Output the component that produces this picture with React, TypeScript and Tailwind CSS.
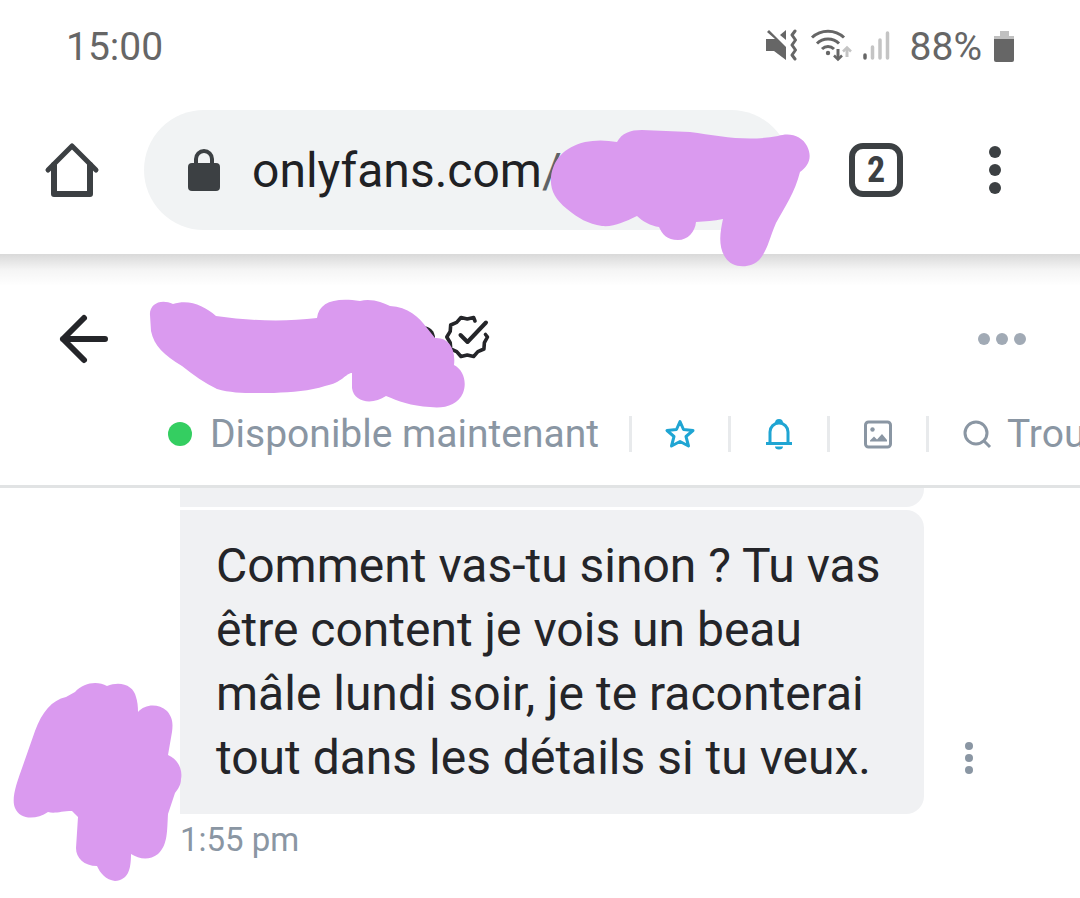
import { useState } from 'react';

const MESSAGE = "Comment vas-tu sinon ? Tu vas être content je vois un beau mâle lundi soir, je te raconterai tout dans les détails si tu veux.";

const StatusBar = () => (
    <div className="relative flex h-[92px] items-center justify-between bg-white px-[66px] pt-0.5 text-[39px] leading-[48px] text-[#666666]">
        <span>15:00</span>
        <div className="flex items-center">
            {/* Muted, vibrating */}
            <svg className="h-9 w-9" viewBox="0 0 36 36" fill="none">
                <path d="M3 1l17 17v13L8 22H0V10h9L1 3z" fill="#666666" />
                <path d="M20 1v10l-6-5z" fill="#666666" />
                <path d="M29 2l-3 4 3.500 5-3.500 5 3.500 5-3.500 5 3 4" stroke="#666666" strokeWidth="3" strokeLinejoin="round" strokeLinecap="round" />
            </svg>
            <svg className="ml-2 h-9 w-11" viewBox="0 0 44 36" fill="none" strokeWidth="3">
                <path d="M2 8.500C11 0 25 0 34 8.500M7 14.500C13 8.500 23 8.500 29 14.500M12 20C15.500 16.500 20.500 16.500 24 20" stroke="#666666" />
                <circle cx="18" cy="24" r="2.200" fill="#666666" />
                <path d="M28 20v10" stroke="#666666" />
                <path d="M24 26.500l4 4 4-4" stroke="#666666" strokeWidth="2.500" />
                <path d="M37 28V19" stroke="#c4c4c4" />
                <path d="M33 22.500l4-4 4 4" stroke="#c4c4c4" strokeWidth="2.500" />
            </svg>
            <svg className="ml-2 h-9 w-8" viewBox="0 0 32 36" fill="none" strokeWidth="3.500" strokeLinecap="round">
                <path d="M3 26v3" stroke="#666666" />
                <path d="M10.500 18v11M18 11v18M25.500 4v25" stroke="#c4c4c4" />
            </svg>
            <span className="ml-4">88%</span>
            <svg className="ml-3 h-8 w-5" viewBox="0 0 20 32">
                <path d="M6 0h9v5h5v4H0V5h6z" fill="#c0c0c0" />
                <path d="M0 8h20v21a2 2 0 0 1-2 2H2a2 2 0 0 1-2-2z" fill="#666666" />
            </svg>
        </div>
    </div>
);

const BrowserBar = () => (
    <div className="relative z-10 flex h-[162px] items-start bg-white pl-11 pt-[18px]">
        <div className="absolute inset-x-0 top-full h-8 bg-linear-to-b from-black/15 via-black/4 to-transparent" />
        <button type="button" aria-label="Accueil" className="mt-8 shrink-0">
            <svg className="h-14 w-14" viewBox="0 0 56 56" fill="none" stroke="#3c4043" strokeWidth="6" strokeLinejoin="round" strokeLinecap="round">
                <path d="M10 23v29h36V23" />
                <path d="M4 28L28 4l24 24" strokeWidth="5" />
            </svg>
        </button>
        <div className="relative ml-11 flex h-[120px] grow items-center rounded-full bg-[#f1f3f4] pl-11 text-[48px] leading-[56px] text-[#202124]">
            <svg className="h-11 w-8 shrink-0" viewBox="0 0 32 44">
                <path d="M8 16V11a8 8 0 0 1 16 0v5" fill="none" stroke="#3c4043" strokeWidth="4" />
                <rect y="15" width="32" height="28" rx="4" fill="#3c4043" />
            </svg>
            <span className="ml-8 pt-0.5">onlyfans.com<span className="text-[#5f6368]">/</span></span>
            <svg className="absolute left-[404px] top-[18px] h-[140px] w-[264px]" viewBox="548 128 264 140">
                <path d="M617 142C622 133 630 130 642 130L690 132C720 136 746 142 778 136C790 132 802 136 807 146C813 158 808 166 800 172C795 192 785 207 776 223C769 239 768 249 760 259C751 269 732 269 725 257C718 246 720 232 723 219C714 221 705 221 696 222C695 232 688 240 678 240C667 240 662 234 659 227C651 226 642 221 637 216C624 222 615 227 602 226C588 224 578 218 567 209C555 199 550 190 551 177C553 160 564 147 585 142Q600 139 617 142Z" fill="#da9aef" />
            </svg>
        </div>
        <button type="button" aria-label="Onglets" className="ml-[58px] mt-[33px] flex h-[54px] w-[54px] shrink-0 items-center justify-center rounded-[14px] border-6 border-[#3c4043] font-['Roboto_Condensed','Liberation_Sans_Narrow','Roboto',sans-serif] text-[36px] font-bold leading-none text-[#3c4043]">2</button>
        <button type="button" aria-label="Menu" className="ml-20 mt-9 mr-[73px] shrink-0">
            <svg className="h-12 w-6" viewBox="0 0 24 48" fill="#3c4043">
                <circle cx="12" cy="6" r="6" />
                <circle cx="12" cy="24" r="6" />
                <circle cx="12" cy="42" r="6" />
            </svg>
        </button>
    </div>
);

const Divider = () => <div className="h-9 w-[3px] shrink-0 bg-[#e8eaec]" />;

const ProfileHeader = () => {
    const [favorite, setFavorite] = useState(false);

    return (
        <header className="border-b-3 border-[#e1e3e4] text-[#8a96a3]">
            <div className="flex h-[150px] items-center pl-14 pr-[53px] pt-5">
                <button type="button" aria-label="Retour" className="shrink-0">
                    <svg className="h-14 w-14" viewBox="0 0 56 56" fill="none" stroke="#242529" strokeWidth="6" strokeLinecap="round" strokeLinejoin="round">
                        <path d="M28 7L7 28l21 21M7 28h42" />
                    </svg>
                </button>
                <div className="relative ml-8 h-[120px] w-[350px]">
                    <svg className="absolute left-[300px] top-[35px] h-12 w-12" viewBox="444 314 48 48" fill="none" stroke="#242529" strokeWidth="4" strokeLinejoin="round" strokeLinecap="round">
                        <path d="M475 321L473.600 317.500L467.300 319L461 317.500L456.700 322.400L450.700 325L450.200 331.400L446.800 337L450.200 342.600L450.700 349L456.700 351.600L461 356.500L467.300 355L473.600 356.500L477.900 351.600L483.900 349L484.400 342.600L487.500 337L485.500 334.500" strokeWidth="3.600" />
                        <path d="M460.500 335l7 7 18.500-19.500" />
                    </svg>
                    <svg className="absolute left-0 top-[15px] h-[120px] w-[330px]" viewBox="144 294 330 120">
                        <circle cx="423" cy="338" r="12" fill="#242529" />
                        <path d="M150 315C149 304 161 298 173 304C190 299 204 306 216 316C250 321 285 322 317 318C319 303 333 297 360 301C372 298 383 303 390 306C408 307 419 317 427 328L435 338C448 337 456 348 454 365C464 370 467 383 463 393C458 405 444 409 430 407C411 406 398 401 386 396C373 405 354 403 352 388V373C346 373 342 383 325 386C310 391 292 392 274 393C252 393 234 394 217 389C205 383 193 375 182 366C164 355 154 346 151 331Z" fill="#da9aef" />
                    </svg>
                </div>
                <button type="button" aria-label="Plus" className="ml-auto shrink-0">
                    <svg className="h-4 w-[50px]" viewBox="0 0 50 16" fill="#a1aab5">
                        <circle cx="7" cy="8" r="6" />
                        <circle cx="25" cy="8" r="6" />
                        <circle cx="43" cy="8" r="6" />
                    </svg>
                </button>
            </div>
            <div className="flex h-[81px] items-start overflow-hidden whitespace-nowrap pl-[168px] pt-1 text-[39px] leading-[52px]">
                <div className="flex shrink-0 items-center">
                    <span className="h-6 w-6 rounded-full bg-[#34ce61]" />
                    <span className="ml-[18px] w-[419px]">Disponible maintenant</span>
                </div>
                <div className="flex h-[52px] shrink-0 items-center">
                    <Divider />
                    <button type="button" aria-label="Favori" aria-pressed={favorite} onClick={() => setFavorite(!favorite)} className="mx-8">
                        <svg className="h-8 w-8" viewBox="0 0 32 32" fill="none" stroke="#1fa5d3" strokeWidth="3" strokeLinejoin="round">
                            <path d="M16 3.500L19.500 11.500L29 12.500L22 18.500L24.500 28L16 23.500L7.500 28L10 18.500L3 12.500L12.500 11.500Z" />
                        </svg>
                    </button>
                    <Divider />
                    <button type="button" aria-label="Notifications" className="mx-8">
                        <svg className="h-8 w-8" viewBox="0 0 32 32" fill="none" stroke="#1fa5d3" strokeWidth="3">
                            <path d="M3 25.500h26M7 25V14a9 9 0 0 1 18 0v11" />
                            <path d="M12 5a4 4 0 0 1 8 0zM12 28.500h8a4 3 0 0 1-8 0z" fill="#1fa5d3" stroke="none" />
                        </svg>
                    </button>
                    <Divider />
                    <button type="button" aria-label="Galerie" className="mx-8">
                        <svg className="h-8 w-8" viewBox="0 0 32 32" fill="#8a96a3">
                            <rect x="3.500" y="4" width="25" height="25" rx="3" fill="none" stroke="#8a96a3" strokeWidth="3" />
                            <circle cx="10.500" cy="11.500" r="2.200" />
                            <path d="M8 23.500v-1l4-4 3 3 5-5.500 5 6v1.500z" />
                        </svg>
                    </button>
                    <Divider />
                    <button type="button" className="ml-8 flex items-center">
                        <svg className="h-8 w-8" viewBox="0 0 32 32" fill="none" stroke="#8a96a3" strokeWidth="3">
                            <circle cx="15" cy="15" r="11" />
                            <path d="M23 23l6 6" />
                        </svg>
                        <span className="ml-3.5">Trouver</span>
                    </button>
                </div>
            </div>
        </header>
    );
};

const Conversation = () => (
    <main className="relative pl-[180px]">
        <div className="h-[19px] w-[744px] rounded-br-[18px] bg-[#f0f1f3]" />
        <div className="mt-[3px] flex items-end">
            <p className="w-[744px] shrink-0 rounded-r-[18px] bg-[#f0f1f3] px-9 pb-6 pt-6 text-[48px] leading-[64px] text-[#242529]">{MESSAGE}</p>
            <button type="button" aria-label="Options du message" className="mb-[38px] ml-[37px]">
                <svg className="h-9 w-4" viewBox="0 0 16 36" fill="#8a96a3">
                    <circle cx="8" cy="6" r="4" />
                    <circle cx="8" cy="18" r="4" />
                    <circle cx="8" cy="30" r="4" />
                </svg>
            </button>
        </div>
        <time className="mt-1 block text-[33px] leading-[44px] text-[#8a96a3]">1:55 pm</time>
        <svg className="absolute left-2 top-[188px] h-[210px] w-[180px]" viewBox="8 676 180 210">
            <path d="M75 692C84 682 98 681 107 686C121 680 134 686 136 697Q138 703 138 712C145 704 158 703 167 711C173 718 173 724 172 732L168 755C178 759 183 770 181 779C181 785 178 789 175 793L168 814C167 830 168 845 158 854C149 861 139 859 131 854C131 870 128 880 115 881C106 880 100 873 97 866C84 866 76 858 76 848L78 817L72 811C61 811 55 814 48 812C36 820 20 820 15 808C11 799 17 782 21 771L35 731C42 712 52 700 66 697Z" fill="#da9aef" />
        </svg>
    </main>
);

export default function App() {
    return (
        <div className="min-h-screen overflow-hidden bg-white font-['Roboto',sans-serif]">
            <StatusBar />
            <BrowserBar />
            <ProfileHeader />
            <Conversation />
        </div>
    );
}
